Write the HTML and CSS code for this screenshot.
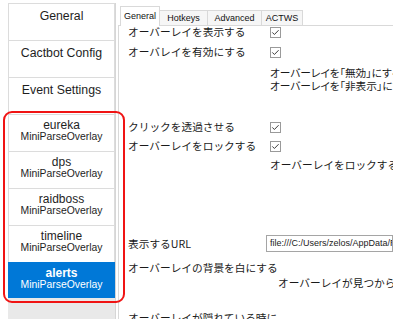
FILE: index.html
```html
<!DOCTYPE html>
<html lang="ja">
<head>
<meta charset="utf-8">
<link rel="stylesheet" href="styles.css">
</head>
<body>
<div class="app">
  <div class="sidebar">
    <div class="item single">General</div>
    <div class="item single">Cactbot Config</div>
    <div class="item single">Event Settings</div>
    <div class="item"><div class="name">eureka</div><div class="sub">MiniParseOverlay</div></div>
    <div class="item"><div class="name">dps</div><div class="sub">MiniParseOverlay</div></div>
    <div class="item"><div class="name">raidboss</div><div class="sub">MiniParseOverlay</div></div>
    <div class="item"><div class="name">timeline</div><div class="sub">MiniParseOverlay</div></div>
    <div class="item selected"><div class="name">alerts</div><div class="sub">MiniParseOverlay</div></div>
  </div>
  <div class="tabs">
    <div class="tabstrip">
      <div class="tab active t-general">General</div>
      <div class="tab t-hotkeys">Hotkeys</div>
      <div class="tab t-advanced">Advanced</div>
      <div class="tab t-actws">ACTWS</div>
    </div>
    <div class="panel">
      <div class="row r1"><span class="label">オーバーレイを表示する</span><svg class="cb" viewBox="0 0 11 11" width="11" height="11"><rect x="0.5" y="0.5" width="10" height="10" fill="#fff" stroke="#9a9a9a"/><path d="M2.3 5.4 L4.4 7.5 L8.6 3.2" fill="none" stroke="#3c3c3c" stroke-width="1"/></svg></div>
      <div class="row r2"><span class="label">オーバレイを有効にする</span><svg class="cb" viewBox="0 0 11 11" width="11" height="11"><rect x="0.5" y="0.5" width="10" height="10" fill="#fff" stroke="#9a9a9a"/><path d="M2.3 5.4 L4.4 7.5 L8.6 3.2" fill="none" stroke="#3c3c3c" stroke-width="1"/></svg></div>
      <div class="desc d1">オーバーレイを「無効」にすると、オーバーレイは完全に停止します。<br>オーバーレイを「非表示」にすると、オーバーレイは動作し続けます。</div>
      <div class="row r3"><span class="label">クリックを透過させる</span><svg class="cb" viewBox="0 0 11 11" width="11" height="11"><rect x="0.5" y="0.5" width="10" height="10" fill="#fff" stroke="#9a9a9a"/><path d="M2.3 5.4 L4.4 7.5 L8.6 3.2" fill="none" stroke="#3c3c3c" stroke-width="1"/></svg></div>
      <div class="row r4"><span class="label">オーバーレイをロックする</span><svg class="cb" viewBox="0 0 11 11" width="11" height="11"><rect x="0.5" y="0.5" width="10" height="10" fill="#fff" stroke="#9a9a9a"/><path d="M2.3 5.4 L4.4 7.5 L8.6 3.2" fill="none" stroke="#3c3c3c" stroke-width="1"/></svg></div>
      <div class="desc d2">オーバーレイをロックすると、移動やサイズ変更ができなくなります。</div>
      <div class="row r5"><span class="label">表示するURL</span><div class="url">file:///C:/Users/zelos/AppData/Roaming/Advanced Combat Tracker/</div></div>
      <div class="row r6"><span class="label">オーバーレイの背景を白にする</span></div>
      <div class="desc d3">オーバーレイが見つからない場合に役立ちます。</div>
      <div class="row r7"><span class="label">オーバーレイが隠れている時に</span></div>
    </div>
  </div>
</div>
<div class="highlight"></div>
</body>
</html>
```

FILE: styles.css
```css
html, body {
  margin: 0;
  padding: 0;
  background: #ffffff;
  width: 393px;
  height: 319px;
  overflow: hidden;
}

.app {
  display: flex;
  height: 319px;
}

.sidebar {
  margin-left: 8px;
  margin-top: 3px;
  width: 107px;
  background: #e9e9e9;
  border-right: 1px solid #d6d6d6;
  display: flex;
  flex-direction: column;
  font-family: "Liberation Sans", Arial, sans-serif;
  color: #1e1e1e;
}

.item {
  box-sizing: border-box;
  height: 37px;
  background: #ffffff;
  border: 1px solid #dcdcdc;
  border-bottom: none;
  text-align: center;
  padding-top: 4px;
  font-size: 12px;
  line-height: 12px;
}

.item.single {
  padding-top: 6px;
  font-size: 12.3px;
}

.item .sub {
  font-size: 10.4px;
  line-height: 12px;
}

.item.selected {
  background: #0078d7;
  border-color: #0078d7;
  color: #ffffff;
  height: 36px;
}

.item.selected .name {
  font-weight: bold;
}

.tabs {
  margin-left: 2px;
  flex: 1;
  display: flex;
  flex-direction: column;
  min-width: 0;
}

.tabstrip {
  height: 19px;
  margin-top: 7px;
  display: flex;
  align-items: flex-end;
  padding-left: 2px;
  font-family: "Liberation Sans", Arial, sans-serif;
  font-size: 9px;
  color: #111;
  border-bottom: 1px solid #d9d9d9;
  box-sizing: border-box;
}

.tab {
  box-sizing: border-box;
  height: 15px;
  line-height: 14px;
  text-align: center;
  border: 1px solid #d9d9d9;
  border-bottom: none;
  border-left: none;
  background: #f6f6f6;
}

.tab.active {
  line-height: 18px;
  background: #ffffff;
  border-left: 1px solid #d9d9d9;
  margin-bottom: -1px;
  height: 20px;
}

.t-general { width: 40px; }
.t-hotkeys { width: 48px; }
.t-advanced { width: 54px; }
.t-actws { width: 41px; }

.panel {
  flex: 1;
  border-left: 1px solid #d9d9d9;
  padding-left: 9px;
  font-family: "Noto Sans CJK JP", "Liberation Sans", sans-serif;
  font-size: 10.7px;
  line-height: 12px;
  color: #1a1a1a;
  overflow: hidden;
}

.row {
  display: grid;
  grid-template-columns: 142px auto;
  align-items: center;
  white-space: nowrap;
  height: 12px;
}

.label {
  white-space: nowrap;
}

.cb {
  display: block;
}

.desc {
  padding-left: 142px;
  white-space: nowrap;
}

.r1 { margin-top: 0; }
.r2 { margin-top: 8px; }
.d1 { margin-top: 8px; line-height: 13px; font-feature-settings: "palt"; }
.r3 { margin-top: 29px; }
.r4 { margin-top: 7px; }
.d2 { margin-top: 7px; }
.r5 { margin-top: 64px; height: 17px; }
.r6 { margin-top: 10px; }
.d3 { margin-top: 3px; padding-left: 150px; }
.r7 { margin-top: 23px; }

.url {
  box-sizing: border-box;
  height: 17px;
  margin-left: -4px;
  border: 1px solid #a5a5a5;
  padding-left: 3px;
  font-family: "Liberation Sans", Arial, sans-serif;
  font-size: 9px;
  line-height: 15px;
  white-space: nowrap;
  overflow: hidden;
  color: #222;
}

.highlight {
  position: absolute;
  left: 3px;
  top: 111px;
  width: 122px;
  height: 192px;
  box-sizing: border-box;
  border: 2px solid #f01414;
  border-radius: 9px;
}
```
